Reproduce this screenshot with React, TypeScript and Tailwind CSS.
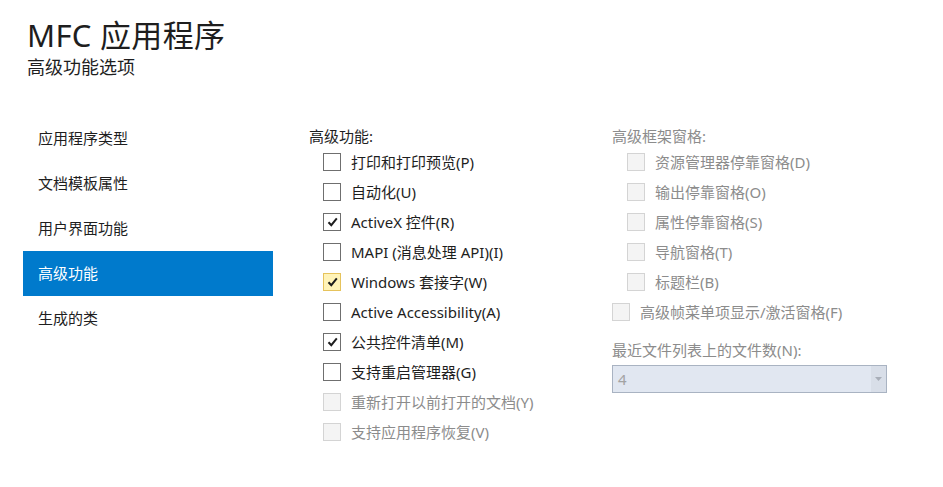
import clsx from 'clsx'

type Opt = { label: string; checked?: boolean; disabled?: boolean; hot?: boolean; indent?: boolean }

const navItems = ['应用程序类型', '文档模板属性', '用户界面功能', '高级功能', '生成的类']

const features: Opt[] = [
  { label: '打印和打印预览(P)' },
  { label: '自动化(U)' },
  { label: 'ActiveX 控件(R)', checked: true },
  { label: 'MAPI (消息处理 API)(I)' },
  { label: 'Windows 套接字(W)', checked: true, hot: true },
  { label: 'Active Accessibility(A)' },
  { label: '公共控件清单(M)', checked: true },
  { label: '支持重启管理器(G)' },
  { label: '重新打开以前打开的文档(Y)', disabled: true },
  { label: '支持应用程序恢复(V)', disabled: true }
]

const panes: Opt[] = [
  { label: '资源管理器停靠窗格(D)', disabled: true, indent: true },
  { label: '输出停靠窗格(O)', disabled: true, indent: true },
  { label: '属性停靠窗格(S)', disabled: true, indent: true },
  { label: '导航窗格(T)', disabled: true, indent: true },
  { label: '标题栏(B)', disabled: true, indent: true },
  { label: '高级帧菜单项显示/激活窗格(F)', disabled: true }
]

const font = { fontFamily: '"Noto Sans", "Noto Sans CJK SC", sans-serif' }

export default function App() {
  return (
    <div className="h-[487px] w-[943px] overflow-hidden bg-white text-[#1e1e1e]" style={font}>
      {/* header */}
      <div className="pl-[27px] pt-[17px]">
        <div className="h-[36px] text-[31px] leading-[36px] tracking-[0.3px]">MFC 应用程序</div>
        <div className="mt-[2px] h-[24px] text-[18px] leading-[24px]">高级功能选项</div>
      </div>

      <div className="mt-[37px] flex pl-[23px]">
        {/* left nav */}
        <ul className="w-[250px]">
          {navItems.map((t) => (
            <li
              key={t}
              className={clsx(
                'flex h-[45px] items-center pl-[15px] text-[15px]',
                t === '高级功能' && 'bg-[#007acc] text-white'
              )}
            >
              {t}
            </li>
          ))}
        </ul>

        {/* features column */}
        <div className="ml-[36px] w-[303px] pt-[9px]">
          <div className="h-[22px] text-[15px] leading-[22px]">高级功能:</div>
          {features.map((o) => (
            <CheckRow key={o.label} opt={o} indent={14} />
          ))}
        </div>

        {/* frame panes column */}
        <div className="w-[280px] pt-[9px]">
          <div className="h-[22px] text-[15px] leading-[22px] text-[#8c8c8c]">高级框架窗格:</div>
          {panes.map((o) => (
            <CheckRow key={o.label} opt={o} indent={o.indent ? 15 : 0} />
          ))}
          <div className="mt-[12px] h-[22px] text-[15px] leading-[22px] text-[#8c8c8c]">
            最近文件列表上的文件数(N):
          </div>
          <div className="mt-[4px] flex h-[28px] w-[275px] border border-[#a9b3c2] bg-[#e1e7f1]">
            <div className="flex flex-1 items-center pl-[5px] text-[15px] text-[#a3a3a3]">4</div>
            <div className="flex w-[15px] items-center justify-center bg-[#d8dee8]">
              <svg width="7" height="4" viewBox="0 0 7 4">
                <path d="M0 0h7L3.5 4z" fill="#a8aeb8" />
              </svg>
            </div>
          </div>
        </div>
      </div>
    </div>
  )
}

function CheckRow({ opt, indent }: { opt: Opt; indent: number }) {
  return (
    <div className="flex h-[30px] items-center" style={{ paddingLeft: indent }}>
      <div
        className={clsx(
          'flex h-[18px] w-[18px] shrink-0 items-center justify-center border',
          opt.disabled
            ? 'border-[#d4d4d4] bg-[#f4f4f4]'
            : opt.hot
              ? 'border-[#e6c35c] bg-[#fff3b8]'
              : 'border-[#6f6f6f] bg-white'
        )}
      >
        {opt.checked && (
          <svg width="11" height="10" viewBox="0 0 11 10">
            <path d="M1.5 5.2l2.8 3L9.8 1.4" fill="none" stroke="#1e1e1e" strokeWidth="2" />
          </svg>
        )}
      </div>
      <span
        className={clsx(
          'ml-[10px] whitespace-nowrap text-[15px]',
          opt.disabled ? 'text-[#8c8c8c]' : 'text-[#1e1e1e]'
        )}
      >
        {opt.label}
      </span>
    </div>
  )
}
